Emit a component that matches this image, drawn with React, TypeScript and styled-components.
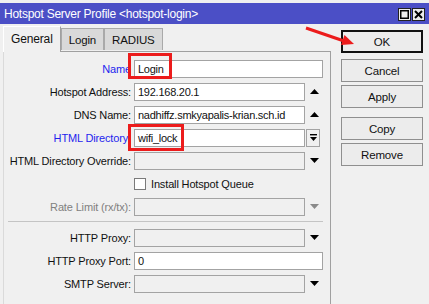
import React from 'react';
import styled, { createGlobalStyle } from 'styled-components';

const GlobalStyle = createGlobalStyle`
  html, body {
    margin: 0;
    padding: 0;
    background: #f0f0f0;
  }
  body {
    font-family: 'Liberation Sans', Arial, sans-serif;
    font-size: 11px;
    letter-spacing: -0.15px;
    color: #111;
  }
`;

const Window = styled.div`
  position: relative;
  width: 429px;
  height: 304px;
  overflow: hidden;
  background: #f0f0f0;
  display: flex;
  flex-direction: column;
`;

const TitleBar = styled.div`
  margin-top: 3px;
  height: 21px;
  flex-shrink: 0;
  box-sizing: border-box;
  padding: 0 4px;
  background: #4b4fc6;
  color: #fff;
  font-size: 12px;
  letter-spacing: -0.25px;
  display: flex;
  align-items: center;
  justify-content: space-between;
`;

const WinButtons = styled.div`
  align-self: flex-end;
  padding-bottom: 3px;
  display: flex;
  gap: 1px;
`;

const WinButton = styled.div`
  width: 13px;
  height: 13px;
  box-sizing: border-box;
  border: 1px solid #222;
  background: #ececec;
  display: flex;
  align-items: center;
  justify-content: center;
`;

const Body = styled.div`
  flex: 1;
  display: flex;
`;

const LeftColumn = styled.div`
  margin-left: 3px;
  width: 328px;
  display: flex;
  flex-direction: column;
`;

const Tabs = styled.div`
  height: 27px;
  flex-shrink: 0;
  display: flex;
  align-items: flex-end;
`;

const Tab = styled.div<{ $active?: boolean }>`
  position: relative;
  z-index: ${p => (p.$active ? 1 : 0)};
  box-sizing: border-box;
  height: ${p => (p.$active ? 26 : 22)}px;
  margin-bottom: ${p => (p.$active ? -1 : 1)}px;
  padding: ${p => (p.$active ? '0 7px 2px' : '0 7px')};
  border: 1px solid #a9a9a9;
  border-bottom: none;
  border-color: ${p => (p.$active ? '#ffffff #a0a0a0 transparent #ffffff' : '#a9a9a9')};
  background: ${p => (p.$active ? '#f0f0f0' : '#d9d9d9')};
  font-size: ${p => (p.$active ? 12 : 11.5)}px;
  display: flex;
  align-items: center;
`;

const Panel = styled.div`
  flex: 1;
  border-top: 1px solid #a0a0a0;
  border-right: 1px solid #a0a0a0;
  border-left: 1px solid #dadada;
  padding-top: 5px;
  display: flex;
  flex-direction: column;
`;

const Row = styled.div`
  height: 23px;
  display: flex;
  align-items: center;
`;

const Label = styled.span<{ $tone?: 'blue' | 'muted' }>`
  width: 127px;
  flex-shrink: 0;
  text-align: right;
  white-space: nowrap;
  color: ${p => (p.$tone === 'blue' ? '#1f1fee' : p.$tone === 'muted' ? '#808080' : '#111')};
`;

const Field = styled.div<{ $disabled?: boolean; $short?: boolean }>`
  margin-left: 3px;
  width: ${p => (p.$short ? 171 : 189)}px;
  height: 18px;
  box-sizing: border-box;
  padding: 0 3px;
  border: 1px solid #a3a3a3;
  background: ${p => (p.$disabled ? '#f0f0f0' : '#fff')};
  color: #111;
  letter-spacing: -0.25px;
  white-space: nowrap;
  overflow: hidden;
  display: flex;
  align-items: center;
`;

const Trail = styled.div`
  width: 18px;
  height: 18px;
  display: flex;
  align-items: center;
  justify-content: center;
`;

const TrailButton = styled.div`
  margin-left: 1px;
  width: 14px;
  height: 18px;
  box-sizing: border-box;
  border: 1px solid #a3a3a3;
  background: #f0f0f0;
  display: flex;
  align-items: center;
  justify-content: center;
`;

const CheckBox = styled.div`
  margin-left: 3px;
  width: 12px;
  height: 12px;
  box-sizing: border-box;
  border: 1px solid #7a7a7a;
  background: #fff;
`;

const CheckText = styled.span`
  margin-left: 5px;
`;

const Separator = styled.div`
  margin: 3px 7px 4px 4px;
  border-top: 1px solid #c4c4c4;
`;

const RightColumn = styled.div`
  padding: 6px 0 0 10px;
  display: flex;
  flex-direction: column;
`;

const Button = styled.div<{ $primary?: boolean; $spaced?: boolean }>`
  width: 82px;
  height: 23px;
  box-sizing: border-box;
  margin-top: ${p => (p.$spaced ? 9 : 3)}px;
  border: ${p => (p.$primary ? '2px solid #111' : '1px solid #8f8f8f')};
  background: #ececec;
  color: #111;
  font-size: 11.5px;
  display: flex;
  align-items: center;
  justify-content: center;
  &:first-child {
    margin-top: 0;
    margin-bottom: 3px;
  }
`;

const Mark = styled.div<{ $x: number; $y: number; $w: number; $h: number }>`
  position: absolute;
  left: ${p => p.$x}px;
  top: ${p => p.$y}px;
  width: ${p => p.$w}px;
  height: ${p => p.$h}px;
  box-sizing: border-box;
  border: 3px solid #ec1c1c;
  pointer-events: none;
`;

const Overlay = styled.svg`
  position: absolute;
  left: 0;
  top: 0;
  pointer-events: none;
`;

type Glyph = 'up' | 'down' | 'downMuted' | 'pick';

const Triangle: React.FC<{ dir: 'up' | 'down'; color?: string }> = ({ dir, color = '#000' }) => (
  <svg width="9" height="5" viewBox="0 0 9 5">
    <polygon points={dir === 'up' ? '0,5 9,5 4.5,0' : '0,0 9,0 4.5,5'} fill={color} />
  </svg>
);

const PickIcon = () => (
  <svg width="7" height="8" viewBox="0 0 7 8">
    <rect x="0" y="0" width="7" height="1.4" fill="#000" />
    <polygon points="0,3 7,3 3.5,7" fill="#000" />
  </svg>
);

const FieldRow: React.FC<{
  label: string;
  tone?: 'blue' | 'muted';
  value?: string;
  disabled?: boolean;
  glyph?: Glyph;
}> = ({ label, tone, value, disabled, glyph }) => (
  <Row>
    <Label $tone={tone}>{label}</Label>
    <Field $disabled={disabled} $short={!!glyph}>{value}</Field>
    {glyph === 'pick' ? (
      <TrailButton>
        <PickIcon />
      </TrailButton>
    ) : glyph ? (
      <Trail>
        <Triangle dir={glyph === 'up' ? 'up' : 'down'} color={glyph === 'downMuted' ? '#8a8a8a' : '#000'} />
      </Trail>
    ) : null}
  </Row>
);

const App: React.FC = () => {
  return (
    <>
      <GlobalStyle />
      <Window>
        <TitleBar>
          <span>Hotspot Server Profile &lt;hotspot-login&gt;</span>
          <WinButtons>
            <WinButton>
              <svg width="9" height="9" viewBox="0 0 9 9">
                <rect x="0.75" y="0.75" width="7.5" height="7.5" fill="none" stroke="#000" strokeWidth="1.5" />
              </svg>
            </WinButton>
            <WinButton>
              <svg width="9" height="9" viewBox="0 0 9 9">
                <path d="M1 1 L8 8 M8 1 L1 8" stroke="#000" strokeWidth="2" />
              </svg>
            </WinButton>
          </WinButtons>
        </TitleBar>
        <Body>
          <LeftColumn>
            <Tabs>
              <Tab $active>General</Tab>
              <Tab>Login</Tab>
              <Tab>RADIUS</Tab>
            </Tabs>
            <Panel>
              <FieldRow label="Name" tone="blue" value="Login" />
              <FieldRow label="Hotspot Address:" value="192.168.20.1" glyph="up" />
              <FieldRow label="DNS Name:" value="nadhiffz.smkyapalis-krian.sch.id" glyph="up" />
              <FieldRow label="HTML Directory:" tone="blue" value="wifi_lock" glyph="pick" />
              <FieldRow label="HTML Directory Override:" disabled glyph="down" />
              <Row>
                <Label />
                <CheckBox />
                <CheckText>Install Hotspot Queue</CheckText>
              </Row>
              <FieldRow label="Rate Limit (rx/tx):" tone="muted" disabled glyph="downMuted" />
              <Separator />
              <FieldRow label="HTTP Proxy:" disabled glyph="down" />
              <FieldRow label="HTTP Proxy Port:" value="0" />
              <FieldRow label="SMTP Server:" disabled glyph="down" />
            </Panel>
          </LeftColumn>
          <RightColumn>
            <Button $primary>OK</Button>
            <Button>Cancel</Button>
            <Button>Apply</Button>
            <Button $spaced>Copy</Button>
            <Button>Remove</Button>
          </RightColumn>
        </Body>
        <Mark $x={128} $y={53} $w={44} $h={26} />
        <Mark $x={128} $y={124} $w={56} $h={27} />
        <Overlay width="429" height="304" viewBox="0 0 429 304">
          <line x1="306" y1="28" x2="344" y2="41" stroke="#ec1c1c" strokeWidth="3" />
          <polygon points="354,44 341,45 344.5,35" fill="#ec1c1c" />
        </Overlay>
      </Window>
    </>
  );
};

export default App;
